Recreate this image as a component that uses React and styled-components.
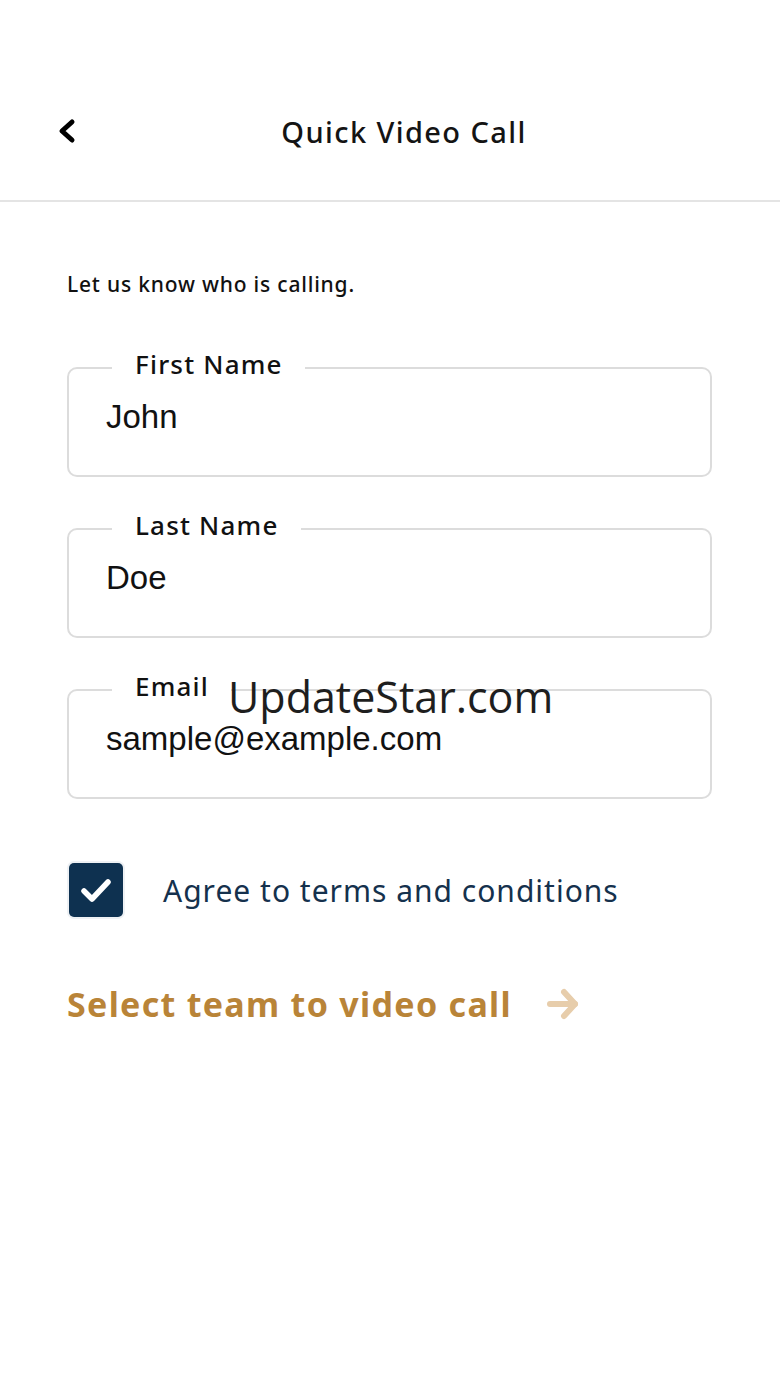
import React from "react";
import styled, { createGlobalStyle } from "styled-components";

const Global = createGlobalStyle`
  html, body { margin: 0; padding: 0; background: #fff; }
  body { font-family: "Noto Sans", "Liberation Sans", sans-serif; }
  * { box-sizing: border-box; }
`;

const Screen = styled.div`
  position: relative;
  width: 780px;
  min-height: 1387px;
  background: #fff;
`;

const Header = styled.header`
  height: 202px;
  padding-top: 100px;
  border-bottom: 2px solid #e4e4e4;
`;

const HeaderRow = styled.div`
  height: 62px;
  display: grid;
  grid-template-columns: 58px 1fr 86px;
  align-items: center;
  padding-left: 56px;
`;

const BackButton = styled.button`
  width: 24px;
  height: 30px;
  padding: 0;
  border: 0;
  background: none;
  display: flex;
  align-items: center;
  justify-content: flex-start;
  cursor: pointer;
`;

const Title = styled.h1`
  margin: 0;
  text-align: center;
  font-size: 29px;
  font-weight: 500;
  color: #141414;
  letter-spacing: 1.4px;
`;

const Content = styled.main`
  padding: 66px 67px 0 67px;
`;

const Intro = styled.p`
  margin: 0 0 48px 0;
  font-size: 21px;
  font-weight: 500;
  line-height: 32px;
  letter-spacing: 0.8px;
  color: #111;
`;

const Fields = styled.div`
  display: flex;
  flex-direction: column;
  gap: 32px;
  width: 645px;
`;

const Field = styled.fieldset`
  margin: 0;
  padding: 10px 0 39px 37px;
  border: 2px solid #dcdcdc;
  border-radius: 10px;
  min-width: 0;
`;

const Legend = styled.legend`
  margin-left: 6px;
  padding: 0 22px 8px 23px;
  font-size: 26px;
  line-height: 32px;
  font-weight: 500;
  letter-spacing: 1.2px;
  color: #111;
`;

const Value = styled.div`
  font-family: "Liberation Sans", Arial, sans-serif;
  font-size: 33px;
  line-height: 38px;
  color: #111;
`;

const CheckRow = styled.label`
  display: flex;
  align-items: center;
  gap: 40px;
  margin-top: 64px;
  padding-left: 2px;
`;

const CheckBox = styled.span`
  width: 54px;
  height: 54px;
  border-radius: 5px;
  background: #0e3150;
  box-shadow: 0 0 0 2px #eef1f4;
  display: flex;
  align-items: center;
  justify-content: center;
`;

const CheckText = styled.span`
  font-size: 30px;
  font-weight: 400;
  letter-spacing: 1px;
  color: #15314d;
`;

const NextLink = styled.a`
  display: inline-flex;
  align-items: center;
  gap: 34px;
  margin-top: 64px;
  font-size: 34px;
  font-weight: 700;
  letter-spacing: 1.3px;
  color: #b98438;
  text-decoration: none;
`;

const Watermark = styled.div`
  position: absolute;
  left: 228px;
  top: 667px;
  font-family: "Open Sans", "Noto Sans", sans-serif;
  font-size: 43px;
  line-height: 60px;
  color: #1e1e1e;
  pointer-events: none;
`;

const fields = [
  { label: "First Name", value: "John" },
  { label: "Last Name", value: "Doe" },
  { label: "Email", value: "sample@example.com" },
];

export default function App() {
  return (
    <Screen>
      <Global />
      <Header>
        <HeaderRow>
          <BackButton aria-label="Back">
            <svg width="22" height="26" viewBox="0 0 22 26">
              <polyline
                points="16,4 6,13 16,22"
                fill="none"
                stroke="#000"
                strokeWidth="5"
                strokeLinecap="round"
                strokeLinejoin="round"
              />
            </svg>
          </BackButton>
          <Title>Quick Video Call</Title>
          <span />
        </HeaderRow>
      </Header>
      <Content>
        <Intro>Let us know who is calling.</Intro>
        <Fields>
          {fields.map((f) => (
            <Field key={f.label}>
              <Legend>{f.label}</Legend>
              <Value>{f.value}</Value>
            </Field>
          ))}
        </Fields>
        <CheckRow>
          <CheckBox>
            <svg width="34" height="28" viewBox="0 0 34 28">
              <polyline
                points="5,15 13,23 29,6"
                fill="none"
                stroke="#fff"
                strokeWidth="5.5"
                strokeLinecap="round"
                strokeLinejoin="round"
              />
            </svg>
          </CheckBox>
          <CheckText>Agree to terms and conditions</CheckText>
        </CheckRow>
        <NextLink href="#">
          Select team to video call
          <svg width="34" height="34" viewBox="0 0 34 34">
            <g
              fill="none"
              stroke="#e7cdab"
              strokeWidth="6"
              strokeLinecap="round"
              strokeLinejoin="round"
            >
              <line x1="4" y1="17" x2="29" y2="17" />
              <polyline points="18,5 29,17 18,29" />
            </g>
          </svg>
        </NextLink>
      </Content>
      <Watermark>UpdateStar.com</Watermark>
    </Screen>
  );
}
